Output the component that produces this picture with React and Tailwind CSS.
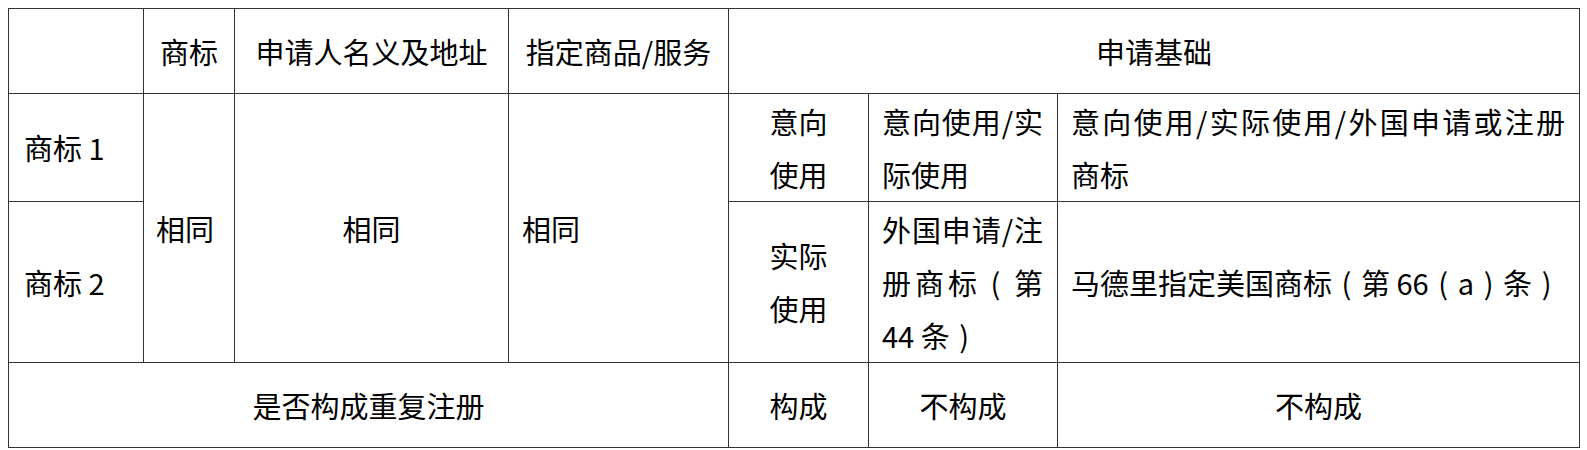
import React from 'react';

const cell = 'bg-white flex items-center text-black';

// Word 里的全角括号是居中显示的，这里用半角括号放在 1em 宽的格子里模拟
const P = ({ children }) => <span className="inline-block w-[1em] text-center">{children}</span>;

const App = () => {
  return (
    <div className="min-h-screen bg-white p-2 font-['Noto_Sans_CJK_SC',sans-serif] text-[29px] leading-[53px]">
      <div className="grid w-[1572px] grid-cols-[134px_90px_273px_219px_139px_188px_521px] grid-rows-[84px_107px_160px_84px] gap-px bg-[#333] p-px">
        {/* 表头 */}
        <div className={cell}></div>
        <div className={`${cell} justify-center`}>商标</div>
        <div className={`${cell} justify-center`}>申请人名义及地址</div>
        <div className={`${cell} justify-center`}>指定商品/服务</div>
        <div className={`${cell} col-span-3 justify-center`}>申请基础</div>

        {/* 商标 1 */}
        <div className={`${cell} pl-[15px]`}>商标 1</div>
        <div className={`${cell} row-span-2 pl-[12px]`}>相同</div>
        <div className={`${cell} row-span-2 justify-center`}>相同</div>
        <div className={`${cell} row-span-2 pl-[13px]`}>相同</div>
        <div className={`${cell} justify-center text-center`}>
          <div>意向<br />使用</div>
        </div>
        <div className={`${cell} pl-[13px] pr-[14px]`}>
          <div className="w-full">
            <div className="text-justify [text-align-last:justify]">意向使用/实</div>
            <div>际使用</div>
          </div>
        </div>
        <div className={`${cell} pl-[13px] pr-[14px]`}>
          <div className="w-full">
            <div className="text-justify [text-align-last:justify]">意向使用/实际使用/外国申请或注册</div>
            <div>商标</div>
          </div>
        </div>

        {/* 商标 2 */}
        <div className={`${cell} pl-[15px]`}>商标 2</div>
        <div className={`${cell} justify-center text-center`}>
          <div>实际<br />使用</div>
        </div>
        <div className={`${cell} pl-[13px] pr-[14px]`}>
          <div className="w-full">
            <div className="text-justify [text-align-last:justify]">外国申请/注</div>
            <div className="flex justify-between">
              <span>册</span><span>商</span><span>标</span><P>(</P><span>第</span>
            </div>
            <div>44 条<P>)</P></div>
          </div>
        </div>
        <div className={`${cell} pl-[13px] pr-[14px] whitespace-nowrap`}>
          <span>马德里指定美国商标<P>(</P>第 66<P>(</P>a<P>)</P>条<P>)</P></span>
        </div>

        {/* 结论 */}
        <div className={`${cell} col-span-4 justify-center`}>是否构成重复注册</div>
        <div className={`${cell} justify-center`}>构成</div>
        <div className={`${cell} justify-center`}>不构成</div>
        <div className={`${cell} justify-center`}>不构成</div>
      </div>
    </div>
  );
};

export default App;
